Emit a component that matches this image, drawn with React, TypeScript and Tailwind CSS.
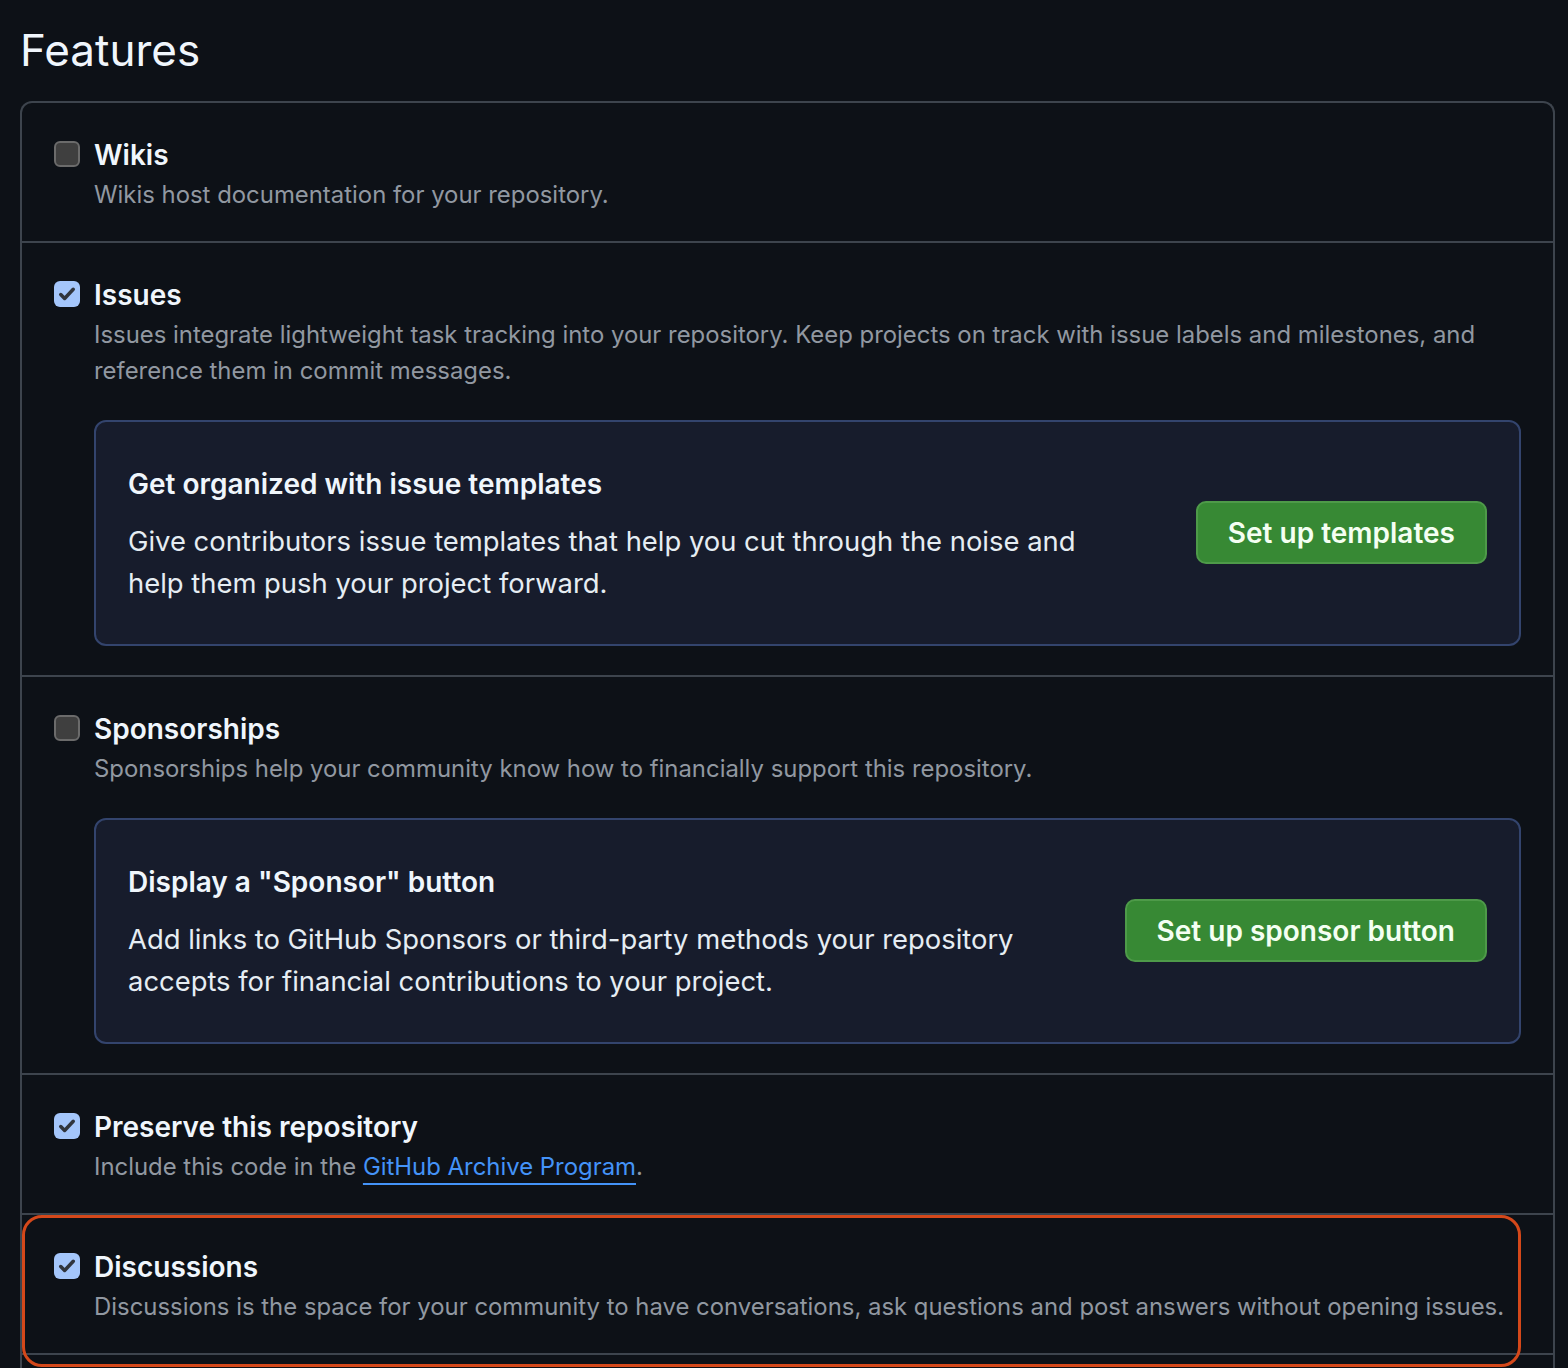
import React from 'react';

const font = { fontFamily: 'Inter, "Noto Sans", sans-serif' };

// Checkbox drawn to look like the native macOS one in the shot
function Check({ checked }: { checked: boolean }) {
  if (!checked) {
    return (
      <span className="mt-[7px] block h-[26px] w-[26px] shrink-0 rounded-[6px] border-2 border-[#6b6b6b] bg-[#3f3f3f]" />
    );
  }
  return (
    <span className="mt-[7px] flex h-[26px] w-[26px] shrink-0 items-center justify-center rounded-[6px] bg-[#a4c6fb]">
      <svg viewBox="0 0 16 16" className="h-[20px] w-[20px]" fill="none" stroke="#30353d" strokeWidth="2.8" strokeLinecap="round" strokeLinejoin="round">
        <path d="M3 8.4l3.1 3.2L13 4.2" />
      </svg>
    </span>
  );
}

function Promo({ title, lines, button }: { title: string; lines: string[]; button: string }) {
  return (
    <div className="mt-[31px] mb-[2px] mr-[32px] flex items-start justify-between rounded-[12px] border-2 border-[#33446d] bg-[#171c2c] pl-[32px] pr-[32px] pt-[42px] pb-[40px]">
      <div>
        <div className="text-[28px] font-semibold leading-[40px] text-[#f0f6fc]">{title}</div>
        <div className="mt-[16px] text-[27.4px] leading-[42px] text-[#e6edf3]">
          {lines.map((l) => (
            <div key={l}>{l}</div>
          ))}
        </div>
      </div>
      <button className="mt-[37px] h-[63px] shrink-0 rounded-[10px] border-2 border-[#4e9a49] bg-[#378934] px-[30px] text-[28px] font-semibold text-[#f4fff2]">
        {button}
      </button>
    </div>
  );
}

function Row({
  checked,
  title,
  children,
  last,
  extra,
}: {
  checked: boolean;
  title: string;
  children: React.ReactNode;
  last?: boolean;
  extra?: React.ReactNode;
}) {
  return (
    <div className={'relative pl-[32px] pt-[31px] ' + (extra ? 'pb-[27px] ' : 'pb-[28px] ') + (last ? '' : 'border-b-2 border-[#3d444d]')}>
      <div className="flex gap-[14px]">
        <Check checked={checked} />
        <div className="flex-1">
          <div className="text-[28px] font-semibold leading-[42px] text-[#f0f6fc]">{title}</div>
          <div className="mt-[1px] pr-[32px] text-[23.9px] leading-[36px] text-[#9198a1]">{children}</div>
          {extra}
        </div>
      </div>
    </div>
  );
}

export default function App() {
  return (
    <div className="min-h-screen bg-[#0d1117] pl-5 pr-[13px] pt-[14px]" style={font}>
      <h2 className="text-[44px] leading-[72px] font-normal text-[#f0f6fc]">Features</h2>

      <div className="mt-[15px] rounded-t-[12px] border-2 border-b-0 border-[#3d444d]">
        <Row checked={false} title="Wikis">
          Wikis host documentation for your repository.
        </Row>

        <Row
          checked={true}
          title="Issues"
          extra={
            <Promo
              title="Get organized with issue templates"
              lines={['Give contributors issue templates that help you cut through the noise and', 'help them push your project forward.']}
              button="Set up templates"
            />
          }
        >
          Issues integrate lightweight task tracking into your repository. Keep projects on track with issue labels and milestones, and reference them in commit messages.
        </Row>

        <Row
          checked={false}
          title="Sponsorships"
          extra={
            <Promo
              title={'Display a "Sponsor" button'}
              lines={['Add links to GitHub Sponsors or third-party methods your repository', 'accepts for financial contributions to your project.']}
              button="Set up sponsor button"
            />
          }
        >
          Sponsorships help your community know how to financially support this repository.
        </Row>

        <Row checked={true} title="Preserve this repository">
          Include this code in the{' '}
          <a href="#" className="text-[#4493f8] underline decoration-2 underline-offset-[8px]">
            GitHub Archive Program
          </a>
          .
        </Row>

        <div className="relative">
          <Row checked={true} title="Discussions">
            Discussions is the space for your community to have conversations, ask questions and post answers without opening issues.
          </Row>
          {/* annotation outline */}
          <div className="pointer-events-none absolute left-0 right-[32px] top-0 bottom-[-12px] rounded-[20px] border-[3px] border-[#d4481a]" />
        </div>

        <div className="h-[120px]" />
      </div>
    </div>
  );
}
